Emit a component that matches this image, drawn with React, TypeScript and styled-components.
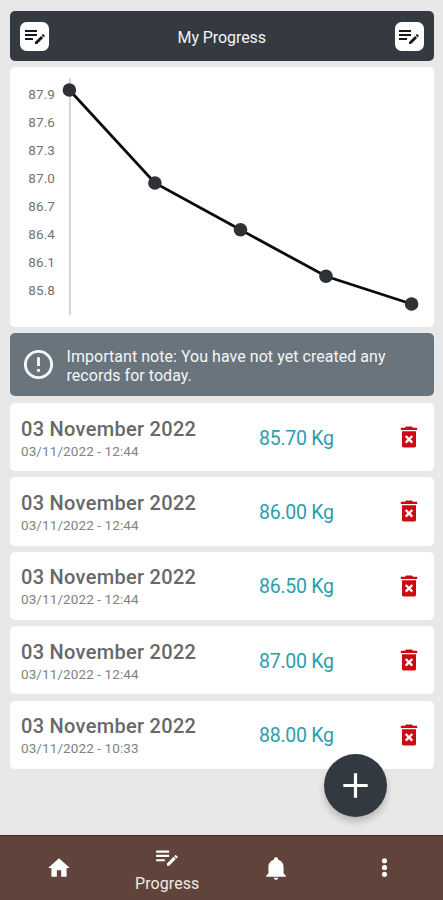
import React from "react";
import styled, { createGlobalStyle } from "styled-components";

const GlobalStyle = createGlobalStyle`
  * { box-sizing: border-box; }
  body { margin: 0; background: #e8e8e8; font-family: Roboto, "Liberation Sans", sans-serif; }
`;

const Screen = styled.div`
  position: relative;
  display: flex;
  flex-direction: column;
  height: 900px;
  width: 443px;
  overflow: hidden;
  background: #e8e8e8;
`;

const Content = styled.main`
  flex: 1;
  display: flex;
  flex-direction: column;
  gap: 6px;
  padding: 11px 9px 0 9.5px;
`;

const Header = styled.header`
  display: flex;
  align-items: center;
  justify-content: space-between;
  height: 50px;
  padding: 0 10.5px;
  border-radius: 5px;
  background: #353a41;
  color: #f3f4f5;
`;

const Title = styled.h1`
  margin: 0;
  padding-top: 2px;
  font-size: 16px;
  font-weight: 400;
  letter-spacing: -0.08px;
`;

const TileButton = styled.button`
  display: flex;
  align-items: center;
  justify-content: center;
  width: 29px;
  height: 29px;
  padding: 0;
  border: 0;
  border-radius: 6.5px;
  background: #fff;
  color: #15181c;
`;

const ChartCard = styled.section`
  height: 260px;
  border-radius: 5px;
  background: #fff;
`;

const AxisLabel = styled.text`
  font-size: 13.5px;
  letter-spacing: 0.15px;
  fill: #737373;
`;

const Note = styled.section`
  display: flex;
  align-items: center;
  gap: 11px;
  height: 63px;
  padding: 0 30px 0 11px;
  border-radius: 5px;
  background: #69747c;
  color: #f4f6f7;
`;

const NoteText = styled.p`
  margin: 0;
  padding-top: 2px;
  font-size: 16px;
  line-height: 19px;
  letter-spacing: 0.04px;
`;

const Records = styled.ul`
  display: flex;
  flex-direction: column;
  gap: 6.2px;
  margin: 1px 0 0;
  padding: 0;
  list-style: none;
`;

const Record = styled.li`
  display: grid;
  grid-template-columns: 238px 1fr 28px;
  align-items: center;
  height: 68.2px;
  padding: 0 11px 0 11.5px;
  border-radius: 5px;
  background: #fff;
`;

const RecordDate = styled.div`
  padding-top: 3px;
  font-size: 20px;
  font-weight: 500;
  line-height: 24px;
  letter-spacing: 0.3px;
  color: #686868;
`;

const RecordTime = styled.div`
  font-size: 13.5px;
  line-height: 20px;
  letter-spacing: 0.1px;
  color: #828282;
`;

const Weight = styled.div`
  padding-top: 2px;
  font-size: 19.5px;
  letter-spacing: -0.25px;
  color: #2b9ead;
`;

const DeleteButton = styled.button`
  display: flex;
  padding: 0;
  border: 0;
  background: none;
  color: #cd0a12;
`;

const AddButton = styled.button`
  position: absolute;
  right: 56.5px;
  bottom: 83.5px;
  display: flex;
  align-items: center;
  justify-content: center;
  width: 63px;
  height: 63px;
  padding: 0;
  border: 0;
  border-radius: 50%;
  background: #333941;
  color: #fff;
  box-shadow: 0 5px 7px rgba(0, 0, 0, 0.2);
`;

const TabBar = styled.nav`
  display: grid;
  grid-template-columns: repeat(4, 108.7px);
  height: 65.5px;
  padding-left: 4.2px;
  background: #60443b;
  border-top: 1px solid #4a2c24;
`;

const Tab = styled.a`
  display: flex;
  flex-direction: column;
  align-items: center;
  justify-content: center;
  color: #fff;
`;

const TabLabel = styled.span`
  margin: 4px 0 -2px;
  font-size: 16px;
  line-height: 20px;
  letter-spacing: 0.1px;
  color: #f2eae7;
`;

const icons = {
  edit: "M2 6V8H14V6H2M2 10V12H14V10H2M20.04 10.13C19.9 10.13 19.76 10.19 19.65 10.3L18.65 11.3L20.7 13.35L21.7 12.35C21.92 12.14 21.92 11.79 21.7 11.58L20.42 10.3C20.31 10.19 20.18 10.13 20.04 10.13M18.07 11.88L12 17.94V20H14.06L20.12 13.93L18.07 11.88M2 14V16H10V14H2Z",
  trash: "M6,19A1.5,1.5 0 0,0 7.5,21H16.5A1.5,1.5 0 0,0 18,19V7H6V19M8.46,11.88L9.87,10.47L12,12.59L14.12,10.47L15.53,11.88L13.41,14L15.53,16.12L14.12,17.53L12,15.41L9.88,17.53L8.47,16.12L10.59,14L8.46,11.88M15.5,4L14.5,3H9.5L8.5,4H5V6H19V4H15.5Z",
  alert: "M11,15H13V17H11V15M11,7H13V13H11V7M12,2C6.47,2 2,6.5 2,12A10,10 0 0,0 12,22A10,10 0 0,0 22,12A10,10 0 0,0 12,2M12,20A8,8 0 0,1 4,12A8,8 0 0,1 12,4A8,8 0 0,1 20,12A8,8 0 0,1 12,20Z",
  home: "M10,20V14H14V20H19V12H22L12,3L2,12H5V20H10Z",
  bell: "M21,19V20H3V19L5,17V11C5,7.9 7.03,5.17 10,4.29C10,4.19 10,4.1 10,4A2,2 0 0,1 12,2A2,2 0 0,1 14,4C14,4.1 14,4.19 14,4.29C16.97,5.17 19,7.9 19,11V17L21,19M14,21A2,2 0 0,1 12,23A2,2 0 0,1 10,21",
  more: "M12,15.7A2.3,2.3 0 0,1 14.3,18A2.3,2.3 0 0,1 12,20.3A2.3,2.3 0 0,1 9.7,18A2.3,2.3 0 0,1 12,15.7M12,9.7A2.3,2.3 0 0,1 14.3,12A2.3,2.3 0 0,1 12,14.3A2.3,2.3 0 0,1 9.7,12A2.3,2.3 0 0,1 12,9.7M12,3.7A2.3,2.3 0 0,1 14.3,6A2.3,2.3 0 0,1 12,8.3A2.3,2.3 0 0,1 9.7,6A2.3,2.3 0 0,1 12,3.7Z",
  plus: "M18.8 12.9H12.9V18.8H11.1V12.9H5.2V11.1H11.1V5.2H12.9V11.1H18.8V12.9Z",
};

function Icon({ name, size }: { name: keyof typeof icons; size: number }) {
  return (
    <svg width={size} height={size} viewBox="0 0 24 24" fill="currentColor" aria-hidden="true">
      <path d={icons[name]} />
    </svg>
  );
}

const ticks = ["87.9", "87.6", "87.3", "87.0", "86.7", "86.4", "86.1", "85.8"];
const points = [
  [59.4, 23],
  [144.9, 116],
  [230.5, 162.8],
  [316, 209.3],
  [401.6, 237],
];

const records = [
  { weight: "85.70", time: "12:44" },
  { weight: "86.00", time: "12:44" },
  { weight: "86.50", time: "12:44" },
  { weight: "87.00", time: "12:44" },
  { weight: "88.00", time: "10:33" },
];

function WeightChart() {
  return (
    <svg width="424" height="260" viewBox="0 0 424 260">
      {ticks.map((t, i) => (
        <AxisLabel key={t} x={18.2} y={32.3 + i * 27.95}>{t}</AxisLabel>
      ))}
      <line x1="59.9" x2="59.9" y1="11" y2="248" stroke="#cbcbcb" strokeWidth="1.6" />
      <polyline points={points.map((p) => p.join(",")).join(" ")} fill="none" stroke="#0b0b0b" strokeWidth="2.8" />
      {points.map(([x, y]) => (
        <circle key={x} cx={x} cy={y} r="6.8" fill="#2e3237" />
      ))}
    </svg>
  );
}

export default function App() {
  return (
    <Screen>
      <GlobalStyle />
      <Content>
        <Header>
          <TileButton aria-label="Edit notes"><Icon name="edit" size={24} /></TileButton>
          <Title>My Progress</Title>
          <TileButton aria-label="Edit records"><Icon name="edit" size={24} /></TileButton>
        </Header>
        <ChartCard><WeightChart /></ChartCard>
        <Note>
          <Icon name="alert" size={35} />
          <NoteText>
            Important note: You have not yet created any
            <br />
            records for today.
          </NoteText>
        </Note>
        <Records>
          {records.map((r) => (
            <Record key={r.weight}>
              <div>
                <RecordDate>03 November 2022</RecordDate>
                <RecordTime>03/11/2022 - {r.time}</RecordTime>
              </div>
              <Weight>{r.weight} Kg</Weight>
              <DeleteButton aria-label="Delete"><Icon name="trash" size={28} /></DeleteButton>
            </Record>
          ))}
        </Records>
      </Content>
      <AddButton aria-label="Add record"><Icon name="plus" size={43} /></AddButton>
      <TabBar>
        <Tab><Icon name="home" size={26} /></Tab>
        <Tab>
          <Icon name="edit" size={26} />
          <TabLabel>Progress</TabLabel>
        </Tab>
        <Tab><Icon name="bell" size={26} /></Tab>
        <Tab><Icon name="more" size={27} /></Tab>
      </TabBar>
    </Screen>
  );
}
